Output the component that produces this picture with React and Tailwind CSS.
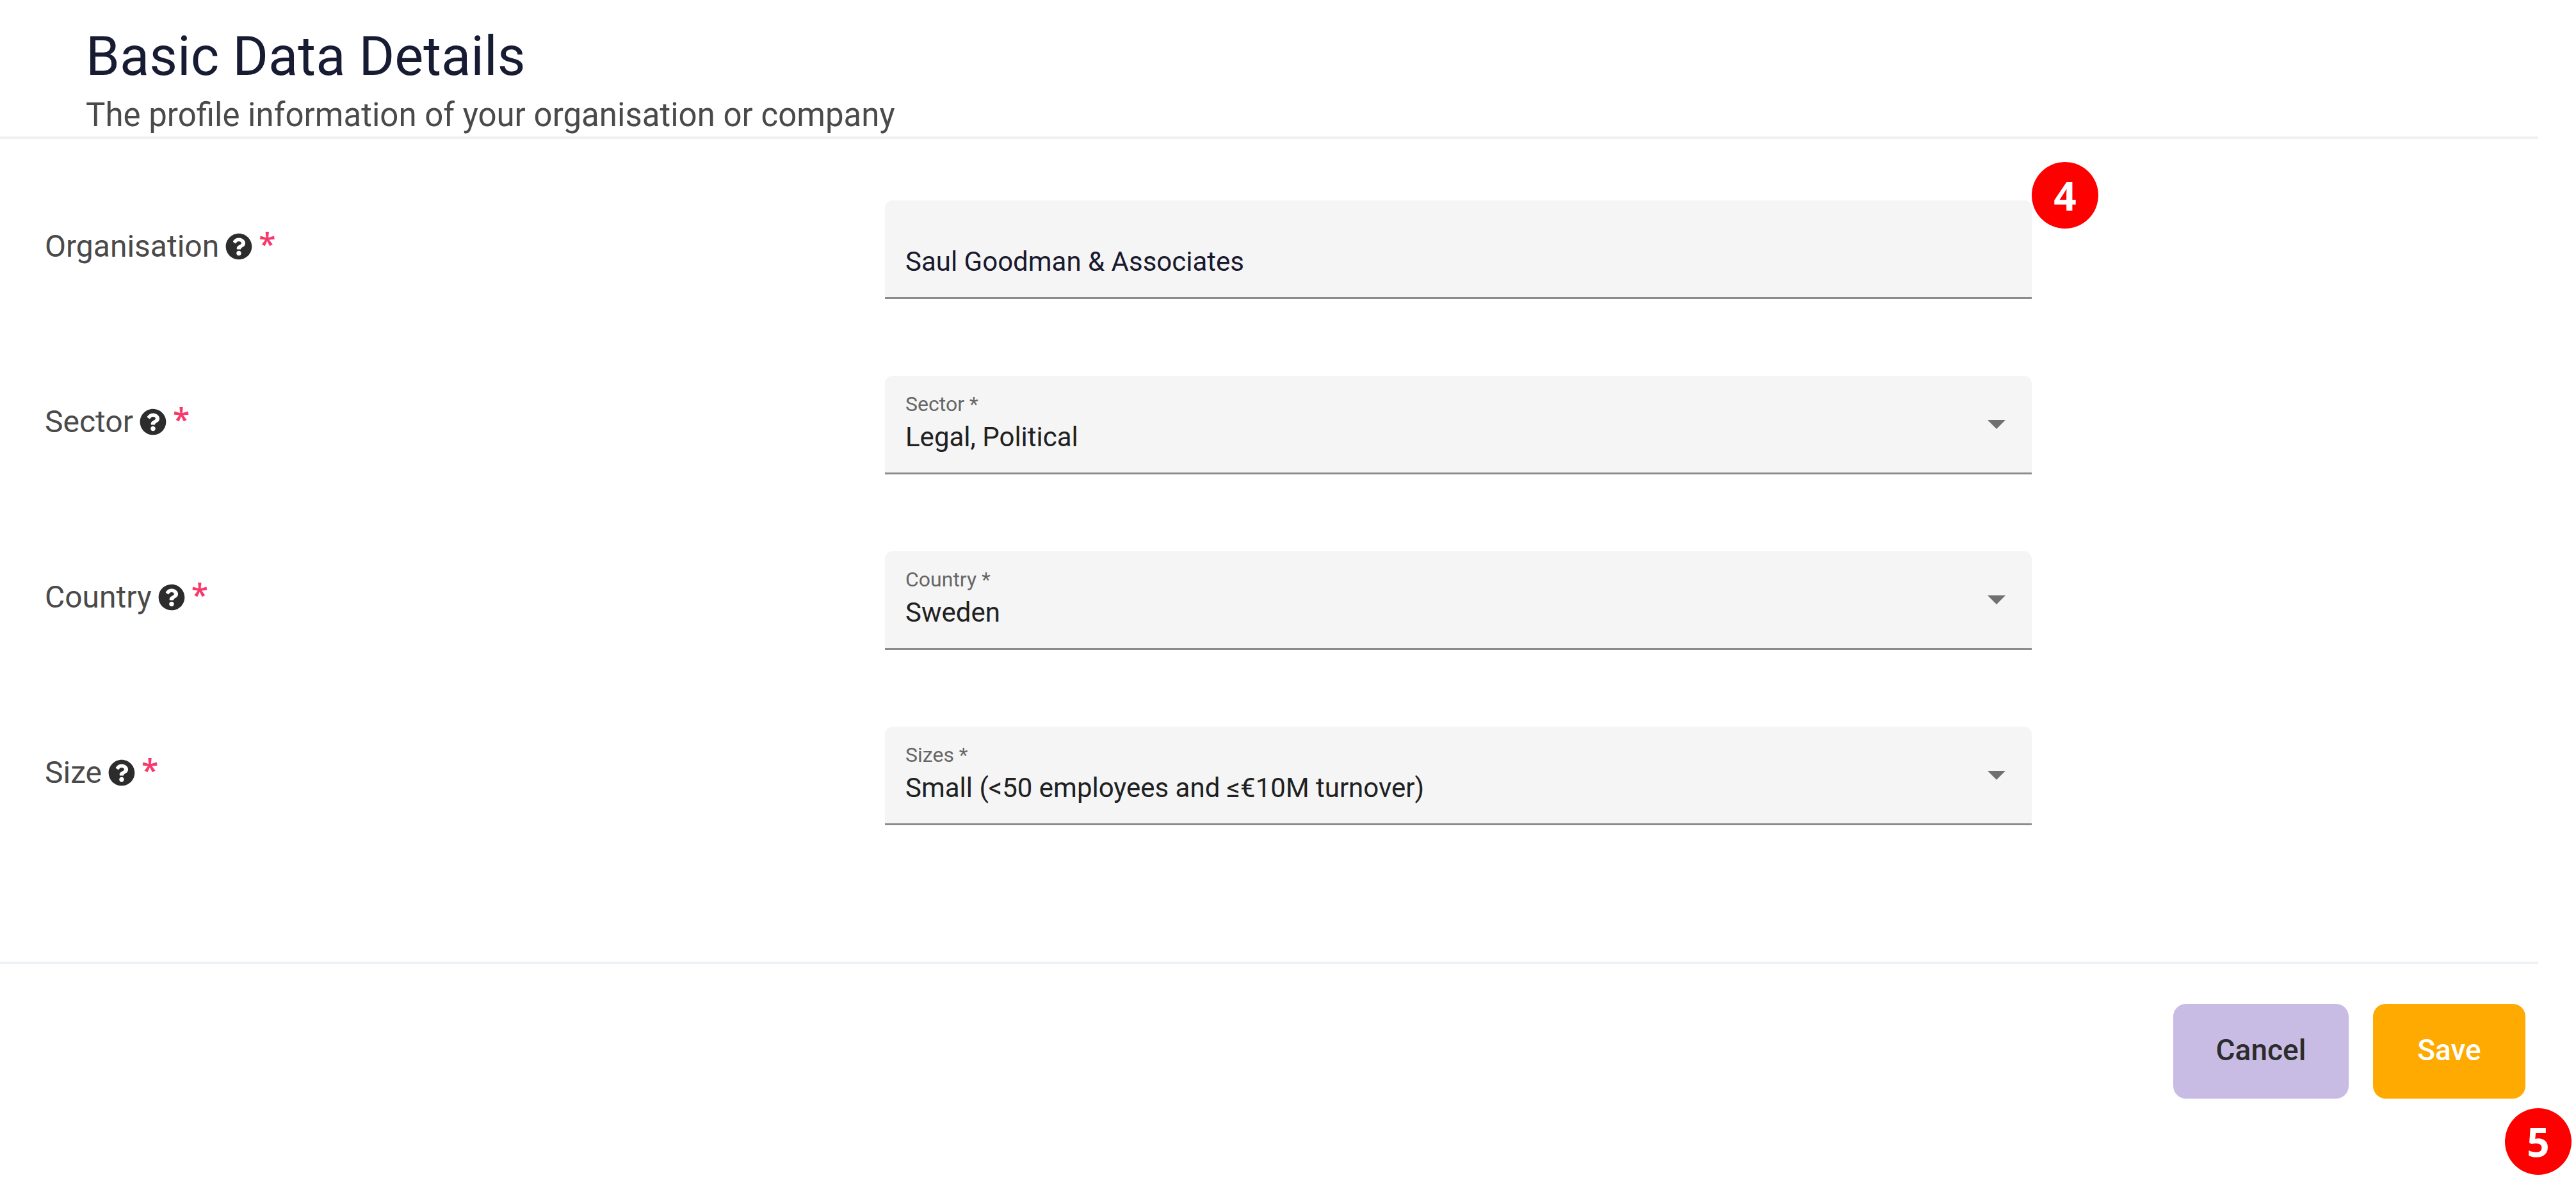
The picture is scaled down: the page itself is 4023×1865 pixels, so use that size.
import React from "react";
import { FaQuestionCircle } from "react-icons/fa";

const fields = [
  { id: "organisation", label: "Organisation", value: "Saul Goodman & Associates", step: 4 },
  { id: "sector", label: "Sector", hint: "Sector *", value: "Legal, Political" },
  { id: "country", label: "Country", hint: "Country *", value: "Sweden" },
  { id: "size", label: "Size", hint: "Sizes *", value: "Small (<50 employees and ≤€10M turnover)" },
];

// Numbered red marker
function StepBadge({ number, className }) {
  return (
    <span
      className={`absolute flex h-[104px] w-[104px] items-center justify-center rounded-full bg-[#ff0000] font-['Open_Sans',sans-serif] text-[62px] leading-none font-bold text-white ${className}`}
    >
      {number}
    </span>
  );
}

function TextField({ id, value }) {
  return (
    <input
      id={id}
      type="text"
      defaultValue={value}
      className="mt-[72px] block h-12 w-full bg-transparent px-8 text-[42px] leading-[48px] text-[#1a1a2e] outline-none"
    />
  );
}

function SelectField({ id, hint, value }) {
  return (
    <>
      <label htmlFor={id} className="mt-6 mb-2 block px-8 text-[32px] leading-10 text-[#666666]">
        {hint}
      </label>
      <select
        id={id}
        defaultValue={value}
        className="block h-12 w-full appearance-none bg-transparent px-8 text-[42px] leading-[48px] text-[#212121] outline-none"
      >
        <option value={value}>{value}</option>
      </select>
      <svg
        viewBox="0 0 28 14"
        className="pointer-events-none absolute top-[69px] right-[41px] h-[14px] w-7 fill-[#707070]"
      >
        <path d="M0 0h28L14 14z" />
      </svg>
    </>
  );
}

export default function App() {
  return (
    <form className="w-full bg-white pr-[59px] font-[Roboto,sans-serif]">
      {/* Header */}
      <header className="border-b-4 border-[#eff2f5] pt-10 pb-[5px] pl-[134px]">
        <h1 className="text-[85px] leading-[96px] text-[#181c32]">Basic Data Details</h1>
        <p className="mt-4 text-[51px] leading-[56px] text-[#4a4a4a]">
          The profile information of your organisation or company
        </p>
      </header>

      {/* Fields */}
      <div className="flex flex-col gap-[120px] border-b-4 border-[#eff2f5] pt-24 pb-[213px]">
        {fields.map((field) => (
          <div key={field.id} className="grid grid-cols-[1312fr_1791fr_791fr] pl-[70px]">
            <div className="mt-10 flex h-16 items-center gap-[10px] self-start">
              <label htmlFor={field.id} className="text-[48px] leading-[64px] text-[#4a4a4a]">
                {field.label}
              </label>
              <FaQuestionCircle className="h-[42px] w-[42px] text-[#2c2c2c]" />
              <span className="self-start font-['Open_Sans',sans-serif] text-[48px] leading-[56px] font-semibold text-[#f8376a]">
                *
              </span>
            </div>

            <div className="relative rounded-t-[12px] border-b-[3px] border-[#8c8c8c] bg-[#f5f5f5] pb-[31px]">
              {field.hint ? <SelectField {...field} /> : <TextField {...field} />}
              {field.step && <StepBadge number={field.step} className="-top-[60px] left-full" />}
            </div>
          </div>
        ))}
      </div>

      {/* Actions */}
      <footer className="flex justify-end gap-[38px] pt-[62px] pr-5 pb-[149px] text-[46px] font-medium">
        <button type="button" className="h-[148px] min-w-[274px] rounded-[20px] bg-[#c8bce4] pb-1 text-[#2c2c2c]">
          Cancel
        </button>
        <div className="relative">
          <button type="submit" className="h-[148px] min-w-[238px] rounded-[20px] bg-[#ffaa00] pb-1 text-white">
            Save
          </button>
          <StepBadge number={5} className="top-[163px] -right-[72px]" />
        </div>
      </footer>
    </form>
  );
}
